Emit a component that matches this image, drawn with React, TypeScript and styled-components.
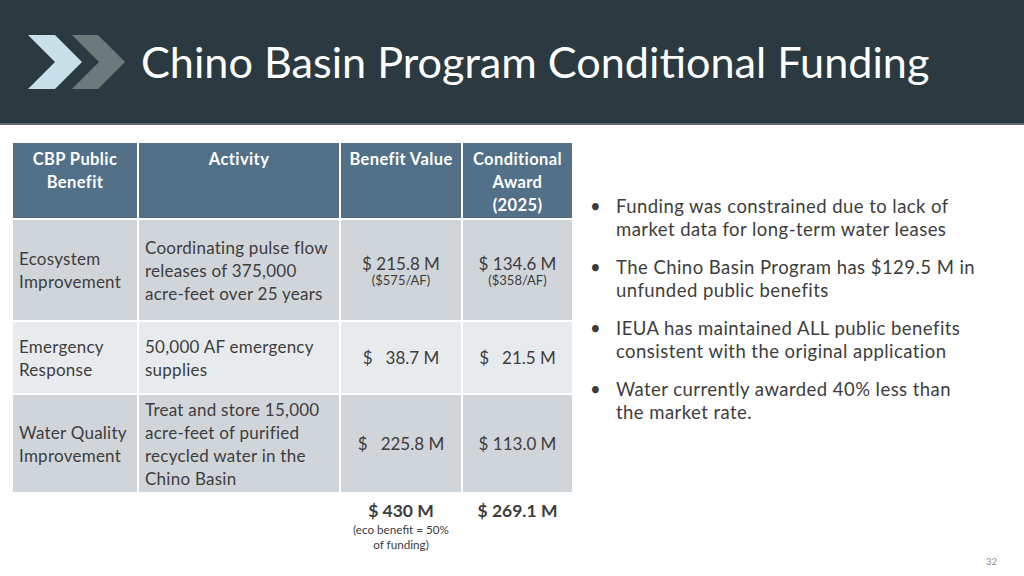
import styled, { createGlobalStyle } from 'styled-components';

const GlobalStyle = createGlobalStyle`
  html, body {
    margin: 0;
    padding: 0;
    background: #ffffff;
  }
  body {
    font-family: 'Lato', 'Open Sans', sans-serif;
  }
`;

const Slide = styled.div`
  width: 1024px;
  height: 576px;
  display: flex;
  flex-direction: column;
  overflow: hidden;
  background: #ffffff;
`;

const Header = styled.header`
  height: 123px;
  flex-shrink: 0;
  display: flex;
  align-items: center;
  gap: 15px;
  padding-left: 28px;
  background: #2b3940;
  border-bottom: 2px solid #5f6a70;
`;

const Title = styled.h1`
  margin: 0 0 2px 0;
  font-size: 43.2px;
  font-weight: 400;
  color: #ffffff;
`;

const Body = styled.main`
  flex: 1;
  display: flex;
  align-items: flex-start;
  gap: 16px;
  padding: 18px 0 0 11px;
`;

const Table = styled.table`
  border-collapse: collapse;
  table-layout: fixed;
  width: 561px;
  color: #3d3d3d;
  font-size: 17px;
  letter-spacing: 0.25px;
  line-height: 23px;
`;

const HeadCell = styled.th<{ $w: number }>`
  width: ${(p) => p.$w}px;
  height: 76px;
  padding: 5px 2px 0;
  box-sizing: border-box;
  vertical-align: top;
  text-align: center;
  font-weight: 700;
  font-size: 16.5px;
  letter-spacing: 0.4px;
  color: #ffffff;
  background: #527087;
  border: 2px solid #ffffff;
  border-top: none;
`;

const Row = styled.tr<{ $shade: 'dark' | 'light'; $h: number }>`
  height: ${(p) => p.$h}px;
  background: ${(p) => (p.$shade === 'dark' ? '#d0d5da' : '#e8ebee')};
`;

const TextCell = styled.td`
  padding: 0 4px 0 6px;
  vertical-align: middle;
  border: 2px solid #ffffff;
`;

const ValueCell = styled.td`
  padding: 0 2px;
  vertical-align: middle;
  text-align: center;
  white-space: pre;
  letter-spacing: 0;
  border: 2px solid #ffffff;
`;

const PerAF = styled.div`
  font-size: 13px;
  line-height: 15px;
  margin-top: -2px;
`;

const TotalCell = styled.td`
  padding: 6px 0 0;
  vertical-align: top;
  text-align: center;
  letter-spacing: 0;
  border: none;
`;

const TotalValue = styled.div`
  font-weight: 700;
  font-size: 17.5px;
  line-height: 22px;
  color: #3d3d3d;
`;

const TotalNote = styled.div`
  font-size: 11.7px;
  line-height: 15px;
  color: #3d3d3d;
`;

const Bullets = styled.ul`
  list-style: none;
  margin: 52px 0 0;
  padding: 0;
  display: flex;
  flex-direction: column;
  gap: 15px;
  color: #3d3d3d;
  font-size: 18.5px;
  letter-spacing: 0.45px;
  line-height: 23px;
`;

const Bullet = styled.li`
  display: flex;
  gap: 16px;
  &::before {
    content: '•';
    width: 10px;
    flex-shrink: 0;
    text-align: center;
  }
`;

const Footer = styled.footer`
  height: 20px;
  display: flex;
  justify-content: flex-end;
  align-items: flex-start;
  padding-right: 27px;
  font-size: 9.5px;
  color: #8a8a8a;
`;

function Chevrons() {
  return (
    <svg width="98" height="58" viewBox="0 0 98 58">
      <polygon points="44,2 70,2 97,29 70,56 44,56 71,29" fill="#6c7a7b" />
      <polygon points="0,2 27,2 54,29 27,56 0,56 27,29" fill="#c9dfea" />
    </svg>
  );
}

const rows = [
  {
    shade: 'dark' as const,
    h: 102,
    benefit: ['Ecosystem', 'Improvement'],
    activity: ['Coordinating pulse flow', 'releases of 375,000', 'acre-feet over 25 years'],
    value: '$ 215.8 M',
    valueAF: '($575/AF)',
    award: '$ 134.6 M',
    awardAF: '($358/AF)',
  },
  {
    shade: 'light' as const,
    h: 73,
    benefit: ['Emergency', 'Response'],
    activity: ['50,000 AF emergency', 'supplies'],
    value: '$   38.7 M',
    award: '$   21.5 M',
  },
  {
    shade: 'dark' as const,
    h: 99,
    benefit: ['Water Quality', 'Improvement'],
    activity: ['Treat and store 15,000', 'acre-feet of purified', 'recycled water in the', 'Chino Basin'],
    value: '$   225.8 M',
    award: '$ 113.0 M',
  },
];

function Lines({ items }: { items: string[] }) {
  return (
    <>
      {items.map((t, i) => (
        <div key={i}>{t}</div>
      ))}
    </>
  );
}

export default function App() {
  return (
    <>
      <GlobalStyle />
      <Slide>
        <Header>
          <Chevrons />
          <Title>Chino Basin Program Conditional Funding</Title>
        </Header>
        <Body>
          <Table>
            <thead>
              <tr>
                <HeadCell $w={126}>CBP Public<br />Benefit</HeadCell>
                <HeadCell $w={202}>Activity</HeadCell>
                <HeadCell $w={122}>Benefit Value</HeadCell>
                <HeadCell $w={111}>Conditional<br />Award<br />(2025)</HeadCell>
              </tr>
            </thead>
            <tbody>
              {rows.map((r, i) => (
                <Row key={i} $shade={r.shade} $h={r.h}>
                  <TextCell><Lines items={r.benefit} /></TextCell>
                  <TextCell><Lines items={r.activity} /></TextCell>
                  <ValueCell>
                    {r.value}
                    {r.valueAF && <PerAF>{r.valueAF}</PerAF>}
                  </ValueCell>
                  <ValueCell>
                    {r.award}
                    {r.awardAF && <PerAF>{r.awardAF}</PerAF>}
                  </ValueCell>
                </Row>
              ))}
            </tbody>
            <tfoot>
              <tr>
                <TotalCell />
                <TotalCell />
                <TotalCell>
                  <TotalValue>$ 430 M</TotalValue>
                  <TotalNote>(eco benefit = 50%<br />of funding)</TotalNote>
                </TotalCell>
                <TotalCell>
                  <TotalValue>$ 269.1 M</TotalValue>
                </TotalCell>
              </tr>
            </tfoot>
          </Table>
          <Bullets>
            <Bullet>
              <span>Funding was constrained due to lack of<br />market data for long-term water leases</span>
            </Bullet>
            <Bullet>
              <span>The Chino Basin Program has $129.5 M in<br />unfunded public benefits</span>
            </Bullet>
            <Bullet>
              <span>IEUA has maintained ALL public benefits<br />consistent with the original application</span>
            </Bullet>
            <Bullet>
              <span>Water currently awarded 40% less than<br />the market rate.</span>
            </Bullet>
          </Bullets>
        </Body>
        <Footer>32</Footer>
      </Slide>
    </>
  );
}
